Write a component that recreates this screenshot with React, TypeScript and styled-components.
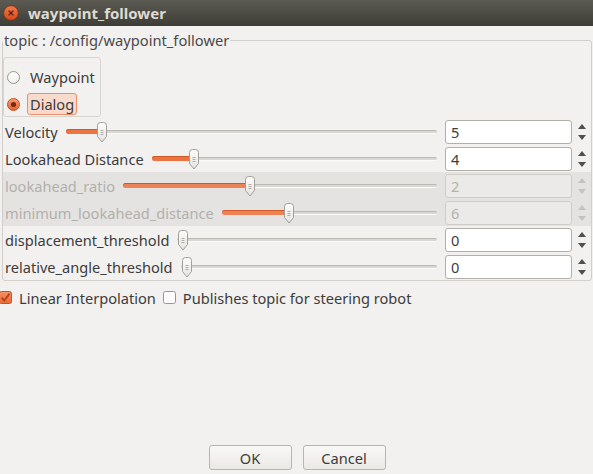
import React from "react";
import styled, { createGlobalStyle } from "styled-components";

const GlobalStyle = createGlobalStyle`
  html, body {
    margin: 0;
    padding: 0;
  }
  body {
    background: #f2f1f0;
    font-family: "Noto Sans", "DejaVu Sans", sans-serif;
    color: #3c3c3c;
  }
`;

const Window = styled.div`
  display: flex;
  flex-flow: column nowrap;
  width: 593px;
  height: 474px;
  overflow: hidden;
  background: #f2f1f0;
`;

const TitleBar = styled.div`
  display: flex;
  align-items: center;
  gap: 9px;
  height: 26px;
  padding-left: 3px;
  background: linear-gradient(#5c5b53, #3d3c37);
  flex-shrink: 0;
`;

const Title = styled.div`
  font-size: 15px;
  font-weight: bold;
  color: #dfdbd2;
  line-height: 26px;
`;

const Body = styled.div`
  flex: 1;
  display: flex;
  flex-flow: column nowrap;
  padding: 6px 1px 4px 2px;
`;

const GroupBox = styled.fieldset`
  margin: 0;
  padding: 0;
  min-width: 0;
  border: 1px solid #d2cfca;
  border-radius: 3px;
`;

const Legend = styled.legend`
  padding: 0 1px;
  margin-left: 0;
  font-size: 14.7px;
  line-height: 16px;
  color: #4a4a4a;
`;

const RadioGroup = styled.div`
  display: flex;
  flex-flow: column nowrap;
  gap: 5px;
  width: fit-content;
  margin: 9px 0 1px 0;
  padding: 8px 2px 1px 3px;
  border: 1px solid #d8d5d1;
  border-radius: 3px;
`;

const RadioRow = styled.label`
  display: flex;
  align-items: center;
  height: 22px;
  gap: 7px;
  font-size: 14.6px;
`;

const RadioText = styled.span<{ $focused?: boolean }>`
  padding: 1px 2px;
  line-height: 18px;
  border-radius: 3px;
  border: 1px solid ${(p) => (p.$focused ? "#ec8f6c" : "transparent")};
  background: ${(p) => (p.$focused ? "#f9dbcd" : "transparent")};
`;

const Rows = styled.div`
  display: flex;
  flex-flow: column nowrap;
`;

const Row = styled.div<{ $disabled?: boolean }>`
  display: flex;
  align-items: center;
  height: 27px;
  padding-left: 2px;
  background: ${(p) => (p.$disabled ? "#e4e3e1" : "transparent")};
`;

const Label = styled.span<{ $disabled?: boolean }>`
  font-size: 14.6px;
  white-space: nowrap;
  margin-right: 8px;
  color: ${(p) => (p.$disabled ? "#b3b0ac" : "#3c3c3c")};
`;

const Slider = styled.div`
  position: relative;
  flex: 1;
  height: 100%;
  display: flex;
  align-items: center;
  margin-right: 8px;
`;

const Groove = styled.div`
  width: 100%;
  height: 2px;
  background: #d9d7d3;
  border-top: 1px solid #bcb9b4;
  border-bottom: 1px solid #fbfbfa;
  border-radius: 2px;
`;

const Fill = styled.div<{ $disabled?: boolean }>`
  position: absolute;
  left: 0;
  top: calc(50% - 2.5px);
  height: 5px;
  border-radius: 3px;
  background: ${(p) => (p.$disabled ? "#ee8257" : "#ec7440")};
  box-shadow: inset 0 1px 0 #cf5a26;
`;

const Handle = styled.svg`
  position: absolute;
  top: calc(50% - 10px);
`;

const SpinBox = styled.div`
  display: flex;
  align-items: center;
`;

const SpinInput = styled.div<{ $disabled?: boolean }>`
  box-sizing: border-box;
  width: 127px;
  height: 24px;
  padding-left: 5px;
  font-size: 14.6px;
  line-height: 22px;
  border: 1px solid ${(p) => (p.$disabled ? "#d0cdc9" : "#b3afa9")};
  border-radius: 3px;
  background: ${(p) => (p.$disabled ? "#ebeae8" : "#ffffff")};
  color: ${(p) => (p.$disabled ? "#b5b2ae" : "#3c3c3c")};
`;

const Arrows = styled.div`
  width: 19px;
  display: flex;
  flex-flow: column nowrap;
  align-items: center;
  gap: 6px;
`;

const Arrow = styled.div<{ $down?: boolean; $disabled?: boolean }>`
  width: 0;
  height: 0;
  border-left: 4px solid transparent;
  border-right: 4px solid transparent;
  ${(p) => (p.$down ? "border-top" : "border-bottom")}: 5px solid
    ${(p) => (p.$disabled ? "#c6c3bf" : "#4f4f4f")};
`;

const CheckRow = styled.div`
  display: flex;
  align-items: center;
  height: 23px;
  margin: 5px 0 0 -3px;
`;

const CheckText = styled.span`
  font-size: 14.6px;
  margin: 0 7px 0 7px;
`;

const ButtonRow = styled.div`
  margin-top: auto;
  display: flex;
  justify-content: center;
  gap: 11px;
`;

const Button = styled.button`
  width: 83px;
  height: 25px;
  padding: 0;
  font-family: inherit;
  font-size: 14.6px;
  color: #3c3c3c;
  border: 1px solid #b8b4ae;
  border-radius: 3px;
  background: linear-gradient(#f8f8f7, #ebe9e6);
`;

const CloseButton = () => (
  <svg width="16" height="16" viewBox="0 0 16 16">
    <defs>
      <linearGradient id="closeg" x1="0" y1="0" x2="0" y2="1">
        <stop offset="0" stopColor="#f27a4a" />
        <stop offset="1" stopColor="#d9491b" />
      </linearGradient>
    </defs>
    <circle cx="8" cy="8" r="7.3" fill="url(#closeg)" stroke="#7e3416" strokeWidth="0.8" />
    <path d="M5.6 5.6 L10.4 10.4 M10.4 5.6 L5.6 10.4" stroke="#4a1a08" strokeWidth="1.2" />
  </svg>
);

const Radio = ({ checked }: { checked?: boolean }) => (
  <svg width="13" height="13" viewBox="0 0 13 13">
    <defs>
      <linearGradient id="rwhite" x1="0" y1="0" x2="0" y2="1">
        <stop offset="0" stopColor="#ffffff" />
        <stop offset="1" stopColor="#f1f0ee" />
      </linearGradient>
      <linearGradient id="rorange" x1="0" y1="0" x2="0" y2="1">
        <stop offset="0" stopColor="#f6a07a" />
        <stop offset="1" stopColor="#e4632f" />
      </linearGradient>
    </defs>
    {checked ? (
      <>
        <circle cx="6.5" cy="6.5" r="6" fill="url(#rorange)" stroke="#c9521f" />
        <circle cx="6.5" cy="6.5" r="2.6" fill="#7a2a0e" />
      </>
    ) : (
      <circle cx="6.5" cy="6.5" r="6" fill="url(#rwhite)" stroke="#99958f" />
    )}
  </svg>
);

const CheckBox = ({ checked }: { checked?: boolean }) => (
  <svg width="13" height="13" viewBox="0 0 13 13">
    <defs>
      <linearGradient id="corange" x1="0" y1="0" x2="0" y2="1">
        <stop offset="0" stopColor="#f5936a" />
        <stop offset="1" stopColor="#e86a35" />
      </linearGradient>
    </defs>
    {checked ? (
      <>
        <rect x="0.5" y="0.5" width="12" height="12" rx="2" fill="url(#corange)" stroke="#c9521f" />
        <path d="M2.6 6.6 L5.2 9.6 L10.6 2.6" fill="none" stroke="#b8410f" strokeWidth="1.8" />
      </>
    ) : (
      <rect x="0.5" y="0.5" width="12" height="12" rx="2" fill="#ffffff" stroke="#99958f" />
    )}
  </svg>
);

const SliderHandle = ({ fraction }: { fraction: number }) => (
  <Handle
    width="12"
    height="21"
    viewBox="0 0 12 21"
    style={{ left: `calc((100% - 12px) * ${fraction})` }}
  >
    <defs>
      <linearGradient id="hg" x1="0" y1="0" x2="0" y2="1">
        <stop offset="0" stopColor="#fdfdfc" />
        <stop offset="1" stopColor="#e5e3e0" />
      </linearGradient>
    </defs>
    <path
      d="M1.5 3.5 Q1.5 0.5 4.5 0.5 H7.5 Q10.5 0.5 10.5 3.5 V14.5 L6 20 L1.5 14.5 Z"
      fill="url(#hg)"
      stroke="#a29e98"
    />
    <path d="M4.5 8.5 H7.5 M4.5 10.5 H7.5 M4.5 12.5 H7.5" stroke="#b0aca7" />
  </Handle>
);

type Param = {
  label: string;
  value: number;
  max: number;
  disabled?: boolean;
};

const params: Param[] = [
  { label: "Velocity", value: 5, max: 60 },
  { label: "Lookahead Distance", value: 4, max: 30 },
  { label: "lookahead_ratio", value: 2, max: 5, disabled: true },
  { label: "minimum_lookahead_distance", value: 6, max: 20, disabled: true },
  { label: "displacement_threshold", value: 0, max: 10 },
  { label: "relative_angle_threshold", value: 0, max: 10 },
];

const ParamRow = ({ label, value, max, disabled }: Param) => {
  const fraction = value / max;
  return (
    <Row $disabled={disabled}>
      <Label $disabled={disabled}>{label}</Label>
      <Slider>
        <Groove />
        {value > 0 && (
          <Fill
            $disabled={disabled}
            style={{ width: `calc((100% - 12px) * ${fraction} + 6px)` }}
          />
        )}
        <SliderHandle fraction={fraction} />
      </Slider>
      <SpinBox>
        <SpinInput $disabled={disabled}>{value}</SpinInput>
        <Arrows>
          <Arrow $disabled={disabled} />
          <Arrow $down $disabled={disabled} />
        </Arrows>
      </SpinBox>
    </Row>
  );
};

const App = () => {
  return (
    <Window>
      <GlobalStyle />
      <TitleBar>
        <CloseButton />
        <Title>waypoint_follower</Title>
      </TitleBar>
      <Body>
        <GroupBox>
          <Legend>topic : /config/waypoint_follower</Legend>
          <RadioGroup>
            <RadioRow>
              <Radio />
              <RadioText>Waypoint</RadioText>
            </RadioRow>
            <RadioRow>
              <Radio checked />
              <RadioText $focused>Dialog</RadioText>
            </RadioRow>
          </RadioGroup>
          <Rows>
            {params.map((p) => (
              <ParamRow key={p.label} {...p} />
            ))}
          </Rows>
        </GroupBox>
        <CheckRow>
          <CheckBox checked />
          <CheckText>Linear Interpolation</CheckText>
          <CheckBox />
          <CheckText>Publishes topic for steering robot</CheckText>
        </CheckRow>
        <ButtonRow>
          <Button>OK</Button>
          <Button>Cancel</Button>
        </ButtonRow>
      </Body>
    </Window>
  );
};

export default App;
